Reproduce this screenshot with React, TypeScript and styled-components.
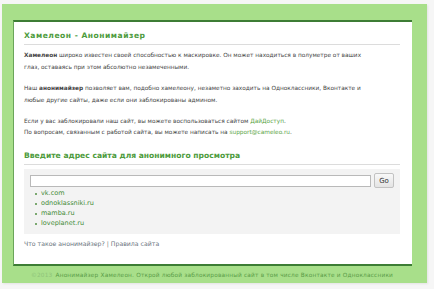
import styled, { createGlobalStyle } from 'styled-components';

const GlobalStyle = createGlobalStyle`
  html, body {
    margin: 0;
    padding: 0;
    background: #f6f6f6;
  }
  body {
    font-family: "DejaVu Sans", Verdana, sans-serif;
  }
`;

const Page = styled.div`
  width: 434px;
  height: 289px;
  padding: 4px 7px 0 2px;
  box-sizing: border-box;
`;

const Frame = styled.div`
  background: #a8df8a;
  padding: 16px 15px 0 11px;
  box-shadow: 1px 1px 2px rgba(0, 0, 0, 0.08);
`;

const Panel = styled.div`
  height: 246px;
  box-sizing: border-box;
  background: #fff;
  border-top: 2px solid #3d7d35;
  border-bottom: 2px solid #3d7d35;
  border-left: 1px solid #6aa55a;
  padding: 0 12px 0 10px;
  color: #444;
  font-size: 5.8px;
`;

const Title = styled.h1<{ $top: number; $spacing?: number }>`
  margin: ${(p) => p.$top}px 0 0;
  padding-bottom: 2px;
  border-bottom: 1px solid #dcdcdc;
  color: #4d9b3c;
  font-size: 7.6px;
  letter-spacing: ${(p) => p.$spacing ?? 0}px;
  line-height: 12px;
  font-weight: bold;
`;

const Text = styled.p<{ $top: number; $line?: number }>`
  margin: ${(p) => p.$top}px 0 0;
  line-height: ${(p) => p.$line ?? 12}px;
  white-space: nowrap;
`;

const Link = styled.a`
  color: #5aa544;
  text-decoration: none;
`;

const SearchBox = styled.div`
  margin-top: 4px;
  background: #f3f3f3;
  padding: 4px 6px 6px;
`;

const Row = styled.div`
  display: flex;
  align-items: center;
  gap: 3px;
`;

const Input = styled.input`
  flex: 1;
  height: 10px;
  border: 1px solid #b9b9b9;
  background: #fff;
  padding: 0;
  margin: 0;
`;

const GoButton = styled.button`
  width: 20px;
  height: 15px;
  padding: 0;
  border: 1px solid #c2c2c2;
  border-radius: 2px;
  background: linear-gradient(#f8f8f8, #e4e4e4);
  font-family: "DejaVu Sans", Verdana, sans-serif;
  font-size: 7px;
  color: #333;
`;

const Sites = styled.ul`
  margin: 0;
  padding: 0 0 0 11px;
  list-style: none;
  font-size: 6.5px;
  line-height: 10px;
`;

const Site = styled.li`
  position: relative;
  color: #3f8a35;
  &::before {
    content: '';
    position: absolute;
    left: -6px;
    top: 5px;
    width: 2px;
    height: 2px;
    background: #7aa870;
  }
`;

const Nav = styled.div`
  margin-top: 4px;
  line-height: 12px;
  font-size: 6.2px;
  color: #7a8088;
`;

const NavLink = styled.a`
  color: #6b7580;
  text-decoration: none;
`;

const Footer = styled.div`
  height: 17px;
  padding-left: 18px;
  display: flex;
  align-items: center;
  font-size: 5.8px;
  letter-spacing: 0.19px;
  color: #5a9c48;
  white-space: nowrap;
`;

const Copy = styled.span`
  color: #8fc47a;
  margin-right: 3px;
`;

export default function App() {
  return (
    <>
      <GlobalStyle />
      <Page>
        <Frame>
          <Panel>
            <Title $top={8} $spacing={0.5}>Хамелеон - Анонимайзер</Title>
            <Text $top={4}>
              <b>Хамелеон</b> широко известен своей способностью к маскировке. Он может находиться в полуметре от ваших
              <br />
              глаз, оставаясь при этом абсолютно незамеченными.
            </Text>
            <Text $top={9}>
              Наш <b>анонимайзер</b> позволяет вам, подобно хамелеону, незаметно заходить на Одноклассники, Вконтакте и
              <br />
              любые другие сайты, даже если они заблокированы админом.
            </Text>
            <Text $top={10} $line={11}>
              Если у вас заблокировали наш сайт, вы можете воспользоваться сайтом <Link href="#">ДайДоступ</Link>.
              <br />
              По вопросам, связанным с работой сайта, вы можете написать на <Link href="#">support@cameleo.ru</Link>.
            </Text>
            <Title $top={12}>Введите адрес сайта для анонимного просмотра</Title>
            <SearchBox>
              <Row>
                <Input type="text" />
                <GoButton>Go</GoButton>
              </Row>
              <Sites>
                <Site>vk.com</Site>
                <Site>odnoklassniki.ru</Site>
                <Site>mamba.ru</Site>
                <Site>loveplanet.ru</Site>
              </Sites>
            </SearchBox>
            <Nav>
              <NavLink href="#">Что такое анонимайзер?</NavLink> | <NavLink href="#">Правила сайта</NavLink>
            </Nav>
          </Panel>
          <Footer>
            <Copy>©2013</Copy>
            Анонимайзер Хамелеон. Открой любой заблокированный сайт в том числе Вконтакте и Одноклассники
          </Footer>
        </Frame>
      </Page>
    </>
  );
}
